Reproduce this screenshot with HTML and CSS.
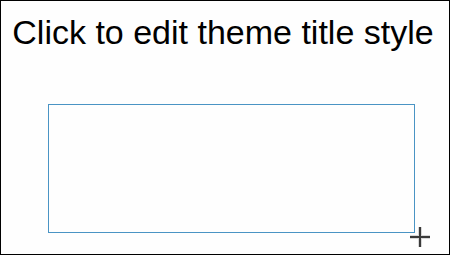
FILE: index.html
```html
<!DOCTYPE html>
<html>
<head>
<meta charset="utf-8">
<link rel="stylesheet" href="styles.css">
</head>
<body>
<div class="slide">
  <div class="title">Click to edit theme title style</div>
  <div class="placeholder">
    <svg class="cursor" width="24" height="24" viewBox="0 0 24 24">
      <path d="M12 2 V22 M2 12 H22" stroke="#d8d8d8" stroke-width="4" fill="none"/>
      <path d="M12 2 V22 M2 12 H22" stroke="#3a3a3a" stroke-width="2" fill="none"/>
    </svg>
  </div>
</div>
</body>
</html>
```
FILE: styles.css
```css
html, body {
  margin: 0;
  padding: 0;
  background: #ffffff;
}
.slide {
  width: 450px;
  height: 255px;
  box-sizing: border-box;
  border: 1px solid #000;
  background: #fefefe;
  display: flex;
  flex-direction: column;
}
.title {
  font-family: "Liberation Sans", Arial, sans-serif;
  font-size: 34px;
  line-height: 38px;
  color: #000;
  text-align: center;
  margin-top: 12px;
  padding-right: 4px;
}
.placeholder {
  position: relative;
  margin-top: 53px;
  margin-left: 47px;
  width: 367px;
  height: 129px;
  box-sizing: border-box;
  border: 1px solid #4a94c4;
}
.cursor {
  position: absolute;
  left: 359px;
  top: 120px;
}
```
